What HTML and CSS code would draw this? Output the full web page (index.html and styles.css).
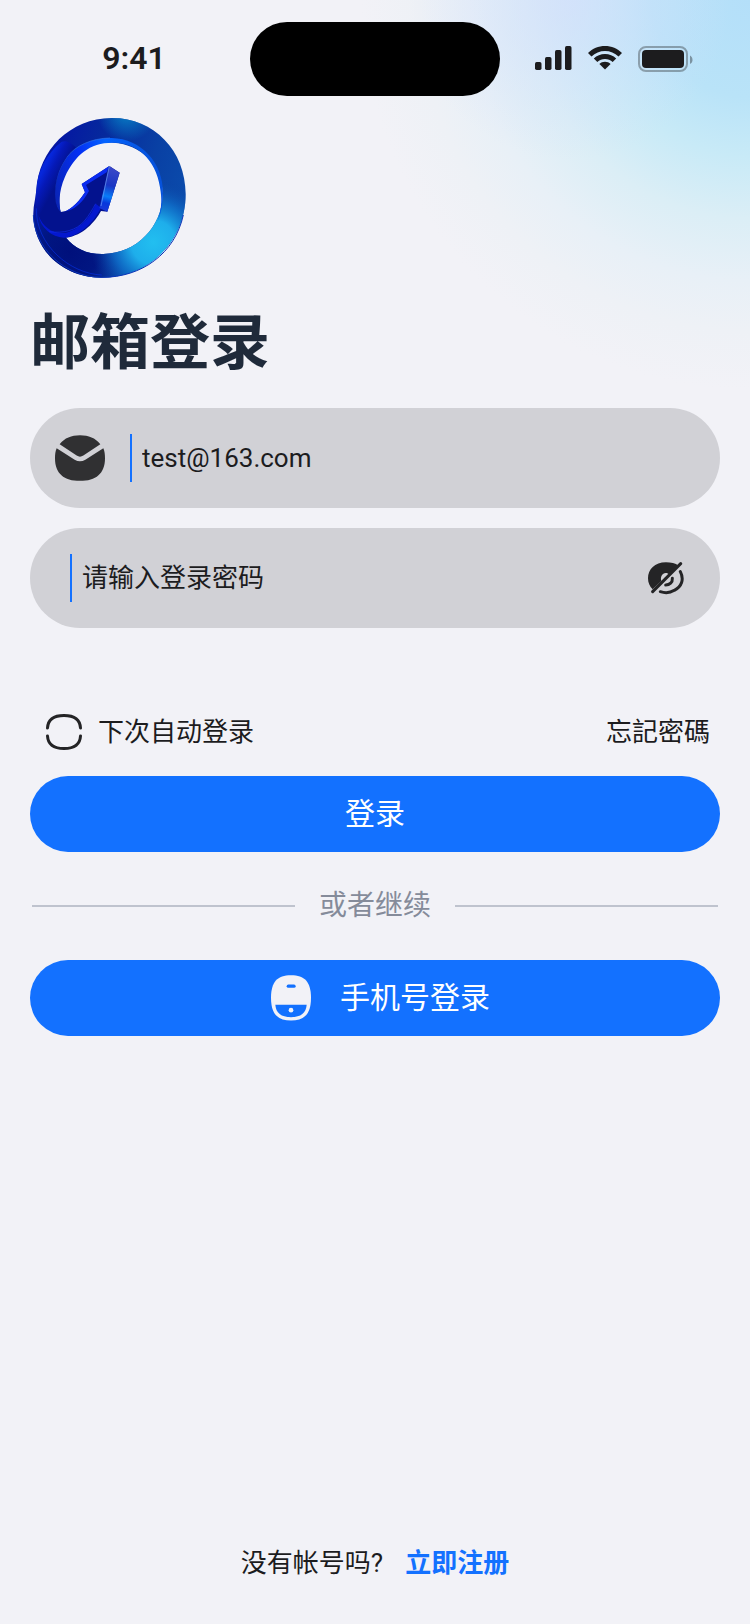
FILE: index.html
```
<!DOCTYPE html>
<html lang="zh-CN">
<head>
    <meta charset="UTF-8">
    <meta name="viewport" content="width=device-width, initial-scale=1.0">
    <title>邮箱登录</title>
    <link rel="stylesheet" href="styles.css">
</head>
<body>
    <header class="status-bar">
        <span class="time">9:41</span>
        <div class="island"></div>
        <div class="status-icons">
            <svg width="37" height="26" viewBox="0 0 37 26" fill="#1c1c1e">
                <rect x="0" y="16" width="6.500" height="8" rx="1.700"/>
                <rect x="10" y="11" width="6.500" height="13" rx="1.700"/>
                <rect x="20" y="4" width="6.500" height="20" rx="1.700"/>
                <rect x="30" y="0" width="6.500" height="24" rx="1.700"/>
            </svg>
            <svg width="34" height="26" viewBox="0 0 34 26" fill="#1c1c1e">
                <path d="M17 0C23.500 0 29.500 2.500 34 7L30.500 10.500C27 7 22 5 17 5S7 7 3.500 10.500L0 7C4.500 2.500 10.500 0 17 0Z"/>
                <path d="M17 8C21.300 8 25.200 9.700 28.200 12.500L24.700 16C22.600 14.100 19.900 13 17 13S11.400 14.100 9.300 16L5.800 12.500C8.800 9.700 12.700 8 17 8Z"/>
                <path d="M17 15.800C19.200 15.800 21.100 16.600 22.600 17.900L17 23.600L11.400 17.900C12.900 16.600 14.800 15.800 17 15.800Z"/>
            </svg>
            <svg width="56" height="26" viewBox="0 0 56 26">
                <rect x="1" y="1" width="48" height="24" rx="7" fill="none" stroke="#1c1c1e" stroke-opacity=".35" stroke-width="2"/>
                <rect x="4" y="4" width="42" height="18" rx="4" fill="#1c1c1e"/>
                <path d="M52 9.500C53.500 10.300 54.500 12 54.500 14S53.500 17.200 52 18Z" fill="#1c1c1e" fill-opacity=".4"/>
            </svg>
        </div>
    </header>

    <main class="container">
        <svg class="logo" viewBox="36 36 465 486">
            <defs>
                <linearGradient id="ring" x1="60" y1="200" x2="490" y2="330" gradientUnits="userSpaceOnUse">
                    <stop offset="0" stop-color="#0414a4"/>
                    <stop offset=".35" stop-color="#062a9c"/>
                    <stop offset=".7" stop-color="#0940a4"/>
                    <stop offset="1" stop-color="#0b4cac"/>
                </linearGradient>
                <radialGradient id="shine" cx="400" cy="412" r="190" gradientUnits="userSpaceOnUse">
                    <stop offset="0" stop-color="#22bff0"/>
                    <stop offset=".35" stop-color="#1eaeeb"/>
                    <stop offset=".65" stop-color="#0f70ca" stop-opacity=".8"/>
                    <stop offset="1" stop-color="#0a3fa0" stop-opacity="0"/>
                </radialGradient>
                <radialGradient id="cyan" cx="320" cy="20" r="90" gradientUnits="userSpaceOnUse">
                    <stop offset="0" stop-color="#0784c8"/>
                    <stop offset="1" stop-color="#0784c8" stop-opacity="0"/>
                </radialGradient>
                <radialGradient id="dark" cx="150" cy="440" r="170" gradientUnits="userSpaceOnUse">
                    <stop offset="0" stop-color="#00107c"/>
                    <stop offset=".5" stop-color="#011682"/>
                    <stop offset="1" stop-color="#011a88" stop-opacity="0"/>
                </radialGradient>
                <linearGradient id="rim" x1="105" y1="300" x2="425" y2="200" gradientUnits="userSpaceOnUse">
                    <stop offset="0" stop-color="#0a24b4"/>
                    <stop offset=".35" stop-color="#0430f4"/>
                    <stop offset=".6" stop-color="#0464ff"/>
                    <stop offset="1" stop-color="#0650d8"/>
                </linearGradient>
                <linearGradient id="edge" x1="52" y1="230" x2="100" y2="255" gradientUnits="userSpaceOnUse">
                    <stop offset="0" stop-color="#0626da"/>
                    <stop offset=".4" stop-color="#0519b8"/>
                    <stop offset="1" stop-color="#03128e"/>
                </linearGradient>
                <linearGradient id="head" x1="285" y1="190" x2="250" y2="320" gradientUnits="userSpaceOnUse">
                    <stop offset="0" stop-color="#3a48c8"/>
                    <stop offset=".4" stop-color="#1a36c4"/>
                    <stop offset=".65" stop-color="#087cf8"/>
                    <stop offset=".8" stop-color="#0638dc"/>
                    <stop offset="1" stop-color="#1c38d8"/>
                </linearGradient>
                <path id="loop" fill-rule="evenodd" d="M40 325C40 300 47 280 49 255C56 135 150 40 275 39C400 38 497 135 497 268C497 405 390 518 245 518C125 518 38 430 40 325ZM280 113C190 108 140 165 125 225C116 262 116 300 122 321L138 398C165 430 200 448 250 447C350 445 426 365 428 270C430 185 365 118 280 113Z"/>
            </defs>
            <use href="#loop" fill="url(#ring)"/>
            <use href="#loop" fill="url(#cyan)"/>
            <use href="#loop" fill="url(#dark)"/>
            <use href="#loop" fill="url(#shine)"/>
            <path d="M122 321C98 302 98 220 135 165C170 115 225 98 275 99C365 101 430 175 429 265C428 300 424 325 412 350C424 318 426 290 422 260C414 180 365 113 280 113C210 112 165 150 135 215C114 262 118 300 122 321Z" fill="url(#rim)"/>
            <path d="M106 300C96 260 108 200 139 158C165 122 215 100 270 99" fill="none" stroke="#3274e4" stroke-width="2"/>
            <path d="M49 255C42 300 55 400 138 398C190 392 225 350 243 318L262 320L299 203L268 183L185 237L195 262C170 300 145 321 122 321C98 302 98 220 135 165C145 148 155 138 168 127C150 112 140 105 125 110C80 145 53 195 49 255Z" fill="url(#edge)"/>
            <path d="M55 330C75 385 132 402 178 363C204 344 218 320 227 296L243 308C220 355 175 395 132 398C95 396 62 370 55 330Z" fill="#0418cf"/>
            <path d="M88 380C130 386 170 376 193 348C209 330 219 309 227 296" fill="none" stroke="#102ef0" stroke-width="2"/>
            <path d="M268 183L185 237L195 262C170 300 145 321 122 321C165 318 188 292 207 258L198 240L260 202Z" fill="#0a2bf0"/>
            <path d="M268 183L299 203L262 320L238 309Z" fill="url(#head)"/>
            <path d="M268 183L243 303" fill="none" stroke="#6f9ff5" stroke-width="2"/>
            <path d="M40 330C42 425 130 516 245 517C365 518 465 445 490 330" fill="none" stroke="#0b35b8" stroke-width="3"/>
            <path d="M49 310C47 420 150 506 245 510" fill="none" stroke="#062fe0" stroke-width="2"/>
        </svg>

        <h1 class="title">邮箱登录</h1>

        <form class="login-form" onsubmit="return false">
            <div class="field">
                <label class="field-icon" for="email" aria-label="邮箱">
                    <svg width="50" height="46" viewBox="105 105 150 137" fill="#303032">
                        <path d="M119 132C134 113 154 105 180 105S226 113 241 132L190 166Q180 173 170 166Z"/>
                        <path d="M110 144L164 179Q180 188 196 179L250 144C254 153 255 162 255 174C255 220 228 242 180 242S105 220 105 174C105 162 106 153 110 144Z"/>
                    </svg>
                </label>
                <input class="field-input" id="email" type="email" value="test@163.com">
            </div>
            <div class="field field-password">
                <input class="field-input" id="password" type="password" placeholder="请输入登录密码" aria-label="登录密码">
                <button class="eye-button" type="button" aria-label="显示密码">
                    <svg width="36" height="33" viewBox="144 185 108 99" fill="none" stroke="#242426" stroke-width="9" stroke-linecap="round">
                        <path d="M236 196C226 189 213 186 198 186C164 186 144 207 144 234C144 247 149 259 158 267L184 242C180 229 187 219 197 218C202 218 205 220 208 223Z" fill="#242426" stroke="none"/>
                        <path d="M196 232L202 229L191 240Z" fill="#242426" stroke-width="3"/>
                        <path d="M158 274L242 190"/>
                        <path d="M241 214C253 237 245 259 223 270C210 278 196 279 181 274"/>
                        <path d="M217 234C218 246 209 254 197 254"/>
                    </svg>
                </button>
            </div>

            <div class="options">
                <label class="remember">
                    <input class="remember-input" type="checkbox">
                    <svg width="36" height="36" viewBox="0 0 36 36" fill="none" stroke="#242426" stroke-width="3" stroke-linecap="round">
                        <path d="M1.500 14C2 5.500 8 1.500 18 1.500S34 5.500 34.500 14"/>
                        <path d="M1.500 22C2 30.500 8 34.500 18 34.500S34 30.500 34.500 22"/>
                    </svg>
                    <span>下次自动登录</span>
                </label>
                <a class="forgot" href="#" lang="zh-TW">忘記密碼</a>
            </div>

            <button class="button" type="submit">登录</button>
            <div class="divider">或者继续</div>
            <button class="button" type="button">
                <svg width="60" height="46" viewBox="30 615 180 137">
                    <path d="M123 615C164 615 183 635 183 683S164 751 123 751S63 731 63 683S82 615 123 615Z" fill="#f2f2f7"/>
                    <path d="M76 704H170C168 729 153 741 123 741S78 729 76 704Z" fill="#1371ff"/>
                    <rect x="110" y="643" width="27" height="10" rx="5" fill="#1371ff"/>
                    <circle cx="123" cy="720" r="7" fill="#f2f2f7"/>
                </svg>
                手机号登录
            </button>
        </form>

        <p class="signup">没有帐号吗?<a class="signup-link" href="#">立即注册</a></p>
    </main>
</body>
</html>
```
FILE: styles.css
```
:root {
    --bg-color: #f2f2f7;
    --field-color: #d1d1d6;
    --text-color: #1c1c1e;
    --title-color: #1f2a3a;
    --muted-color: #858b9a;
    --line-color: #bfc3ce;
    --accent-color: #1371ff;
}

* {
    box-sizing: border-box;
}

body {
    margin: 0;
    min-height: 100vh;
    display: flex;
    flex-direction: column;
    font-family: Roboto, "Noto Sans CJK SC", sans-serif;
    font-size: 26px;
    line-height: 40px;
    color: var(--text-color);
    background:
        radial-gradient(circle 160px at 76% 0, rgba(212, 222, 252, 0.7), rgba(212, 222, 252, 0)) no-repeat,
        radial-gradient(circle 390px at 100% 0, #b4dff9 0, #b9e3f8 25%, #c8eaf7 40%, #dbeef6 56%, #e8f0f7 72%, #eef1f6 85%, var(--bg-color) 100%) no-repeat var(--bg-color);
}

.status-bar {
    display: grid;
    grid-template-columns: 1fr 250px 1fr;
    align-items: center;
    padding: 22px 0 21px;
}

.time {
    padding: 0 0 2px 18px;
    text-align: center;
    font-size: 32px;
    font-weight: 600;
}

.island {
    height: 74px;
    border-radius: 37px;
    background: #000;
}

.status-icons {
    display: flex;
    justify-content: center;
    gap: 16px;
    padding-right: 22px;
}

.container {
    flex: 1;
    display: flex;
    flex-direction: column;
    padding: 0 30px 41px;
}

.logo {
    width: 155px;
    height: 162px;
    margin-left: 2px;
}

.title {
    margin: 29px 0 28px;
    font-size: 60px;
    font-weight: 700;
    line-height: 72px;
    color: var(--title-color);
}

.login-form {
    display: flex;
    flex-direction: column;
}

.field {
    display: flex;
    align-items: center;
    gap: 25px;
    height: 100px;
    padding: 0 36px 0 25px;
    margin-bottom: 20px;
    border-radius: 50px;
    background: var(--field-color);
}

.field-password {
    padding-left: 40px;
}

.field-icon {
    display: flex;
}

.field-input {
    flex: 1;
    min-width: 0;
    height: 48px;
    padding: 0 0 0 10px;
    border: none;
    border-left: 2px solid var(--accent-color);
    outline: none;
    background: none;
    font: inherit;
    color: inherit;
}

.field-input::placeholder {
    color: inherit;
    opacity: 1;
}

.eye-button {
    display: flex;
    padding: 0;
    border: none;
    background: none;
    cursor: pointer;
}

.options {
    display: flex;
    justify-content: space-between;
    align-items: center;
    margin: 64px 0 24px;
    padding: 0 10px 0 16px;
}

.remember {
    position: relative;
    display: flex;
    align-items: center;
    gap: 16px;
    cursor: pointer;
}

.remember-input {
    position: absolute;
    width: 36px;
    height: 36px;
    margin: 0;
    opacity: 0;
}

.forgot {
    color: inherit;
    font-family: Roboto, "Noto Sans CJK TC", sans-serif;
    text-decoration: none;
}

.button {
    display: flex;
    justify-content: center;
    align-items: center;
    gap: 20px;
    height: 76px;
    padding: 0;
    border: none;
    border-radius: 38px;
    background: var(--accent-color);
    color: #fff;
    font-family: inherit;
    font-size: 30px;
    line-height: 40px;
    cursor: pointer;
}

.divider {
    display: flex;
    align-items: center;
    gap: 24px;
    margin: 34px 2px;
    font-size: 28px;
    color: var(--muted-color);
}

.divider::before,
.divider::after {
    content: '';
    flex: 1;
    height: 2px;
    background: var(--line-color);
}

.signup {
    display: flex;
    justify-content: center;
    gap: 22px;
    margin: auto 0 0;
}

.signup-link {
    color: var(--accent-color);
    font-weight: 700;
    text-decoration: none;
}
```
